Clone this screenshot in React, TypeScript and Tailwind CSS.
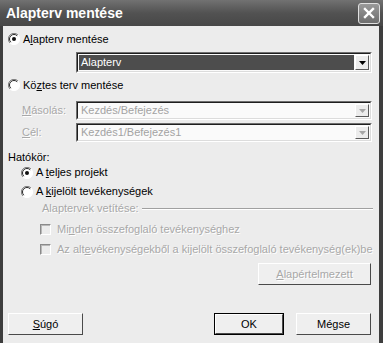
import React from "react";

const U = ({ children }: { children: React.ReactNode }) => (
  <span className="underline underline-offset-[1px]">{children}</span>
);

const Radio = ({ checked }: { checked?: boolean }) => (
  <svg width="12" height="12" viewBox="0 0 12 12" className="shrink-0">
    <circle cx="6" cy="6" r="5.5" fill="#ffffff" />
    <path d="M10 2 A5.5 5.5 0 0 0 2 10" stroke="#7a7a7a" strokeWidth="1" fill="none" />
    <path d="M9.2 2.8 A4.5 4.5 0 0 0 2.8 9.2" stroke="#262626" strokeWidth="1" fill="none" />
    <path d="M2 10 A5.5 5.5 0 0 0 10 2" stroke="#ffffff" strokeWidth="1" fill="none" />
    {checked && <circle cx="6" cy="6" r="2" fill="#111" />}
  </svg>
);

const Check = () => (
  <div className="w-[11px] h-[11px] shrink-0 border-t border-l border-t-[#8a8a8a] border-l-[#8a8a8a] border-r border-b border-r-white border-b-white">
    <div className="w-full h-full border-t border-l border-t-[#b8b8b8] border-l-[#b8b8b8]" />
  </div>
);

const Arrow = ({ color }: { color: string }) => (
  <svg width="7" height="4" viewBox="0 0 7 4">
    <path d="M0 0 H7 L3.5 4 Z" fill={color} />
  </svg>
);

const Combo = ({ text, active }: { text: string; active?: boolean }) => (
  <div className="w-[296px] h-full flex items-stretch border-t border-l border-t-[#6e6e6e] border-l-[#6e6e6e] border-b border-r border-b-white border-r-white">
    <div className="flex-1 flex items-stretch border-t border-l border-t-[#1e1e1e] border-l-[#1e1e1e] border-b border-r border-b-[#dcdcdc] border-r-[#dcdcdc] bg-[#fafafa]">
      <div className="flex-1 flex items-center pl-[1px] py-[1px]">
        <div
          className={`h-full flex items-center pl-[2px] pr-[2px] w-full ${
            active ? "bg-[#4d4d4d] text-white" : "text-[#a3a3a3]"
          }`}
        >
          {text}
        </div>
      </div>
      <div className="w-[14px] m-[1px] flex items-center justify-center bg-[#ececec] border-t border-l border-t-white border-l-white border-b border-r border-b-[#5a5a5a] border-r-[#5a5a5a]">
        <Arrow color={active ? "#000" : "#a6a6a6"} />
      </div>
    </div>
  </div>
);

const Btn = ({
  children,
  w,
  def,
  disabled,
}: {
  children: React.ReactNode;
  w: string;
  def?: boolean;
  disabled?: boolean;
}) => (
  <div className={`${w} h-[22px] ${def ? "border border-black" : ""} flex`}>
    <div className="flex-1 flex items-center justify-center bg-[#efefef] border-t border-l border-t-white border-l-white border-b border-r border-b-[#4a4a4a] border-r-[#4a4a4a]">
      <span className={disabled ? "text-[#a8a8a8] [text-shadow:1px_1px_0_#ffffff]" : "text-black"}>
        {children}
      </span>
    </div>
  </div>
);

export default function App() {
  return (
    <div
      className="w-[383px] h-[343px] overflow-hidden bg-[#3e3e3e] flex flex-col text-[11px] leading-none text-black"
      style={{ fontFamily: '"Liberation Sans", Arial, sans-serif' }}
    >
      {/* Title bar */}
      <div className="h-[26px] shrink-0 flex items-center justify-between bg-gradient-to-b from-[#727272] via-[#525252] to-[#474747] pl-[6px] pr-[3px]">
        <span className="text-white font-bold text-[14px]">Alapterv mentése</span>
        <div className="w-[22px] h-[21px] rounded-[3px] border border-[#e0e0e0] bg-gradient-to-b from-[#9a9a9a] to-[#6e6e6e] flex items-center justify-center">
          <svg width="12" height="12" viewBox="0 0 12 12">
            <path d="M2 2 L10 10 M10 2 L2 10" stroke="#fff" strokeWidth="2.4" strokeLinecap="square" />
          </svg>
        </div>
      </div>
      {/* Body */}
      <div className="flex-1 ml-[3px] mr-[4px] bg-[#ececec] flex flex-col">
        <div className="h-[16px] mt-[5px] flex items-center pl-[5px] gap-[3px]">
          <Radio checked />
          <span>
            A<U>l</U>apterv mentése
          </span>
        </div>
        <div className="h-[21px] mt-[5px] ml-[73px]">
          <Combo text="Alapterv" active />
        </div>
        <div className="h-[16px] mt-[4px] flex items-center pl-[5px] gap-[3px]">
          <Radio />
          <span>
            Kö<U>z</U>tes terv mentése
          </span>
        </div>
        <div className="h-[19px] mt-[8px] flex items-center">
          <span className="w-[73px] pl-[19px] text-[#a8a8a8] [text-shadow:1px_1px_0_#ffffff]">
            <U>M</U>ásolás:
          </span>
          <Combo text="Kezdés/Befejezés" />
        </div>
        <div className="h-[19px] mt-[3px] flex items-center">
          <span className="w-[73px] pl-[19px] text-[#a8a8a8] [text-shadow:1px_1px_0_#ffffff]">
            <U>C</U>él:
          </span>
          <Combo text="Kezdés1/Befejezés1" />
        </div>
        <div className="h-[15px] mt-[8px] flex items-center pl-[5px]">
          <span>Hatókör:</span>
        </div>
        <div className="h-[15px] flex items-center pl-[18px] gap-[3px]">
          <Radio checked />
          <span>
            A <U>t</U>eljes projekt
          </span>
        </div>
        <div className="h-[15px] mt-[4px] flex items-center pl-[18px] gap-[3px]">
          <Radio />
          <span>
            A <U>k</U>ijelölt tevékenységek
          </span>
        </div>
        <div className="h-[15px] mt-[2px] flex items-center pl-[39px] pr-[6px] gap-[3px]">
          <span className="text-[#a8a8a8] [text-shadow:1px_1px_0_#ffffff]">Alaptervek vetítése:</span>
          <div className="flex-1 h-[2px] border-t border-t-[#a0a0a0] border-b border-b-white" />
        </div>
        <div className="h-[15px] mt-[6px] flex items-center pl-[37px] gap-[6px] text-[#a8a8a8] [text-shadow:1px_1px_0_#ffffff]">
          <Check />
          <span>
            Mi<U>n</U>den összefoglaló tevékenységhez
          </span>
        </div>
        <div className="h-[15px] mt-[5px] flex items-center pl-[37px] gap-[6px] text-[#a8a8a8] [text-shadow:1px_1px_0_#ffffff] whitespace-nowrap">
          <Check />
          <span>
            Az alt<U>e</U>vékenységekből a kijelölt összefoglaló tevékenység(ek)be
          </span>
        </div>
        <div className="mt-[6px] flex justify-end pr-[8px]">
          <Btn w="w-[113px]" disabled>
            <U>A</U>lapértelmezett
          </Btn>
        </div>
        <div className="mt-[28px] flex items-center pl-[5px] pr-[8px]">
          <Btn w="w-[75px]">
            <U>S</U>úgó
          </Btn>
          <div className="flex-1" />
          <Btn w="w-[70px]" def>
            OK
          </Btn>
          <div className="w-[12px]" />
          <Btn w="w-[75px]">Mégse</Btn>
        </div>
      </div>
    </div>
  );
}
